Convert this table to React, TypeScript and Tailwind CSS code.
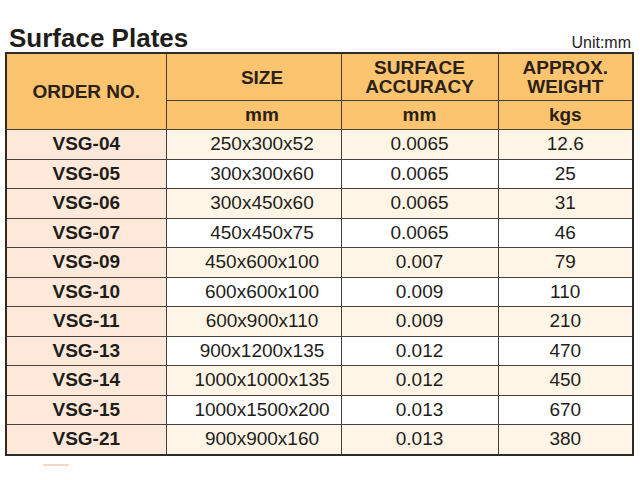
const rows = [
  ['VSG-04', '250x300x52', '0.0065', '12.6'],
  ['VSG-05', '300x300x60', '0.0065', '25'],
  ['VSG-06', '300x450x60', '0.0065', '31'],
  ['VSG-07', '450x450x75', '0.0065', '46'],
  ['VSG-09', '450x600x100', '0.007', '79'],
  ['VSG-10', '600x600x100', '0.009', '110'],
  ['VSG-11', '600x900x110', '0.009', '210'],
  ['VSG-13', '900x1200x135', '0.012', '470'],
  ['VSG-14', '1000x1000x135', '0.012', '450'],
  ['VSG-15', '1000x1500x200', '0.013', '670'],
  ['VSG-21', '900x900x160', '0.013', '380'],
]

export default function App() {
  return (
    <div className="h-[480px] w-[640px] bg-white font-['Liberation_Sans',Arial,sans-serif] text-[#1f1d1a]">
      {/* title line */}
      <div className="flex items-end justify-between pr-[9px] pl-[9px] pt-[24px]">
        <h1 className="text-[26px] leading-[28px] font-bold">Surface Plates</h1>
        <span className="text-[16px] leading-[18px]">Unit:mm</span>
      </div>

      <table className="ml-[5px] w-[627px] table-fixed border-collapse border-2 border-[#2e2a24] text-center">
        <colgroup>
          <col className="w-[160px]" />
          <col className="w-[175px]" />
          <col className="w-[157px]" />
          <col className="w-[135px]" />
        </colgroup>
        <thead className="bg-[#fcc46f] text-[19px] font-bold text-[#2a2218]">
          <tr className="h-[47px]">
            <th rowSpan={2} className="border border-[#4a3f2e] pt-[2px]">
              ORDER NO.
            </th>
            <th className="border border-[#4a3f2e] pt-[2px] pl-[17px]">SIZE</th>
            <th className="border border-[#4a3f2e] leading-[19px]">
              SURFACE
              <br />
              ACCURACY
            </th>
            <th className="border border-[#4a3f2e] leading-[19px]">
              APPROX.
              <br />
              WEIGHT
            </th>
          </tr>
          <tr className="h-[29px]">
            <th className="border border-[#4a3f2e] pl-[17px]">mm</th>
            <th className="border border-[#4a3f2e]">mm</th>
            <th className="border border-[#4a3f2e]">kgs</th>
          </tr>
        </thead>
        <tbody className="text-[19px]">
          {rows.map((r, i) => {
            const bg = i % 2 === 0 ? 'bg-[#fef5e6]' : 'bg-white'
            return (
              <tr key={r[0]} className="h-[29.5px]">
                <td className="border border-[#45423d] bg-[#fde8d9] font-bold">{r[0]}</td>
                <td className={`border border-[#45423d] pl-[17px] ${bg}`}>{r[1]}</td>
                <td className={`border border-[#45423d] ${bg}`}>{r[2]}</td>
                <td className={`border border-[#45423d] ${bg}`}>{r[3]}</td>
              </tr>
            )
          })}
        </tbody>
      </table>

      <div className="mt-[8px] ml-[43px] h-[2px] w-[26px] rounded-full bg-[#f5d6c8]" />
    </div>
  )
}
